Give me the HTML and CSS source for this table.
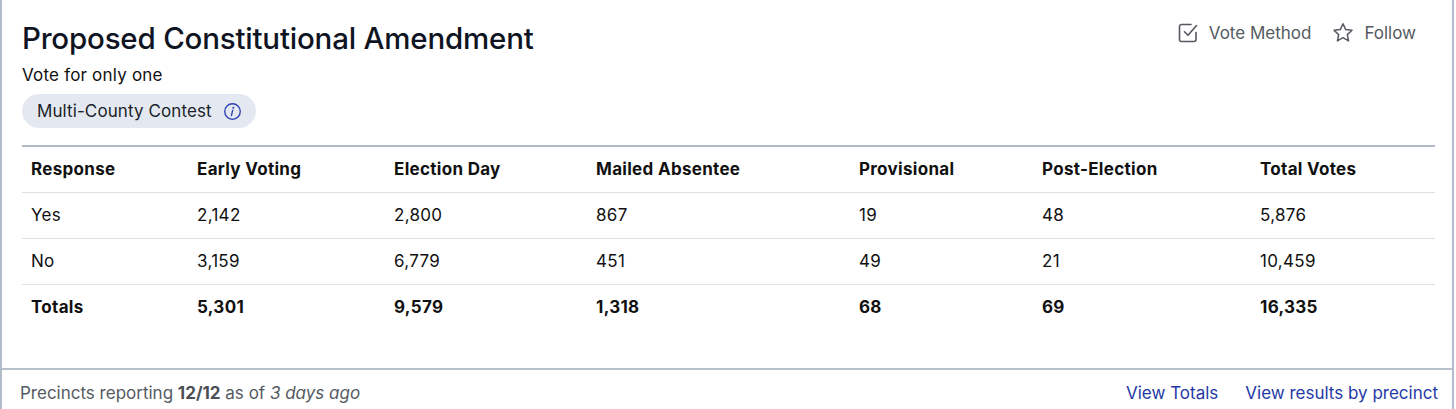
FILE: index.html
```html
<!DOCTYPE html>
<html lang="en">
<head>
<meta charset="utf-8">
<title>Proposed Constitutional Amendment</title>
<link rel="stylesheet" href="styles.css">
</head>
<body>
<div class="card">
  <div class="card-body">
    <div class="head">
      <div class="head-main">
        <h1 class="title">Proposed Constitutional Amendment</h1>
        <div class="subtitle">Vote for only one</div>
        <div class="badge">
          <span>Multi-County Contest</span>
          <svg class="info" viewBox="0 0 20 20" width="19" height="19" aria-hidden="true">
            <circle cx="10" cy="10" r="8.2" fill="none" stroke="currentColor" stroke-width="1.4"/>
            <circle cx="10.9" cy="6.1" r="1.05" fill="currentColor"/>
            <path d="M10.2 8.6 L8.9 14.4" fill="none" stroke="currentColor" stroke-width="1.4" stroke-linecap="round"/>
          </svg>
        </div>
      </div>
      <div class="actions">
        <span class="action">
          <svg viewBox="0 0 24 24" width="24" height="24" aria-hidden="true">
            <path d="M20 11.5V18.5a2 2 0 0 1-2 2H5.5a2 2 0 0 1-2-2V5.5a2 2 0 0 1 2-2H15" fill="none" stroke="currentColor" stroke-width="1.6" stroke-linecap="round" stroke-linejoin="round"/>
            <path d="M8.5 10.8 L12 14.3 L20.5 4.5" fill="none" stroke="currentColor" stroke-width="1.6" stroke-linecap="round" stroke-linejoin="round"/>
          </svg>
          Vote Method
        </span>
        <span class="action">
          <svg viewBox="0 0 24 24" width="24" height="24" aria-hidden="true">
            <path d="M12 2.8 L14.7 8.6 L21 9.3 L16.3 13.6 L17.6 19.9 L12 16.7 L6.4 19.9 L7.7 13.6 L3 9.3 L9.3 8.6 Z" fill="none" stroke="currentColor" stroke-width="1.5" stroke-linejoin="round"/>
          </svg>
          Follow
        </span>
      </div>
    </div>

    <table class="results">
      <colgroup>
        <col class="c1"><col class="c2"><col class="c3"><col class="c4"><col class="c5"><col class="c6"><col class="c7">
      </colgroup>
      <thead>
        <tr><th>Response</th><th>Early Voting</th><th>Election Day</th><th>Mailed Absentee</th><th>Provisional</th><th>Post-Election</th><th>Total Votes</th></tr>
      </thead>
      <tbody>
        <tr><td>Yes</td><td>2,142</td><td>2,800</td><td>867</td><td>19</td><td>48</td><td>5,876</td></tr>
        <tr><td>No</td><td>3,159</td><td>6,779</td><td>451</td><td>49</td><td>21</td><td>10,459</td></tr>
        <tr class="totals"><td>Totals</td><td>5,301</td><td>9,579</td><td>1,318</td><td>68</td><td>69</td><td>16,335</td></tr>
      </tbody>
    </table>
  </div>
  <div class="footer">
    <div class="status">Precincts reporting <b>12/12</b> as of <i>3 days ago</i></div>
    <div class="links">
      <a href="#">View Totals</a>
      <a href="#">View results by precinct</a>
    </div>
  </div>
</div>
</body>
</html>
```

FILE: styles.css
```css
* { box-sizing: border-box; }

html, body {
  margin: 0;
  padding: 0;
  background: #ffffff;
}

body {
  font-family: Inter, "Noto Sans", "Liberation Sans", sans-serif;
  color: #111111;
  overflow: hidden;
}

.card {
  width: 1454px;
  border-left: 2px solid #b3bccb;
  border-right: 2px solid #b3bccb;
  background: #ffffff;
}

.card-body {
  padding: 20px 17px 38px 20px;
}

.head {
  display: flex;
  justify-content: space-between;
  align-items: flex-start;
}

.title {
  margin: 0;
  font-size: 29.5px;
  font-weight: 500;
  line-height: 36px;
  color: #0f1422;
  letter-spacing: -0.2px;
}

.subtitle {
  margin-top: 7px;
  font-size: 17px;
  line-height: 24px;
  letter-spacing: 0.2px;
  color: #111111;
}

.badge {
  display: inline-flex;
  align-items: center;
  gap: 11px;
  margin-top: 7px;
  height: 34px;
  padding: 0 14px 0 15px;
  border-radius: 17px;
  background: #e4e9f1;
  font-size: 17px;
  letter-spacing: 0.1px;
  color: #1b1f2a;
}

.info {
  color: #2c3fb5;
}

.actions {
  display: flex;
  gap: 20px;
  margin-top: 1px;
  padding-right: 19px;
}

.action {
  display: inline-flex;
  align-items: center;
  gap: 9px;
  font-size: 17px;
  line-height: 24px;
  color: #555a61;
}

.action svg {
  color: #55595f;
}

.results {
  width: 1413px;
  margin-top: 17px;
  border-collapse: collapse;
  table-layout: fixed;
  border-top: 2px solid #b0b9c8;
  font-size: 17px;
  letter-spacing: 0.3px;
}

.c1 { width: 166px; }
.c2 { width: 197px; }
.c3 { width: 202px; }
.c4 { width: 263px; }
.c5 { width: 183px; }
.c6 { width: 218px; }
.c7 { width: 184px; }

.results th,
.results td {
  text-align: left;
  padding: 0 9px;
  height: 46px;
  vertical-align: middle;
}

.results th {
  font-weight: 700;
  color: #111111;
  height: 46px;
}

.results thead tr,
.results tbody tr {
  border-bottom: 1px solid #dde1e7;
}

.results tbody tr.totals {
  border-bottom: none;
}

.results td {
  color: #111111;
}

.totals td {
  font-weight: 700;
}

.footer {
  display: flex;
  justify-content: space-between;
  align-items: flex-start;
  border-top: 2px solid #b8c0cc;
  padding: 11px 14px 0 18px;
  height: 60px;
  font-size: 17px;
  line-height: 24px;
}

.status {
  color: #555a61;
}

.status b {
  font-weight: 700;
  color: #4b4f55;
}

.links {
  display: flex;
  gap: 27px;
}

.links a {
  color: #1f3aa6;
  text-decoration: none;
}
```
